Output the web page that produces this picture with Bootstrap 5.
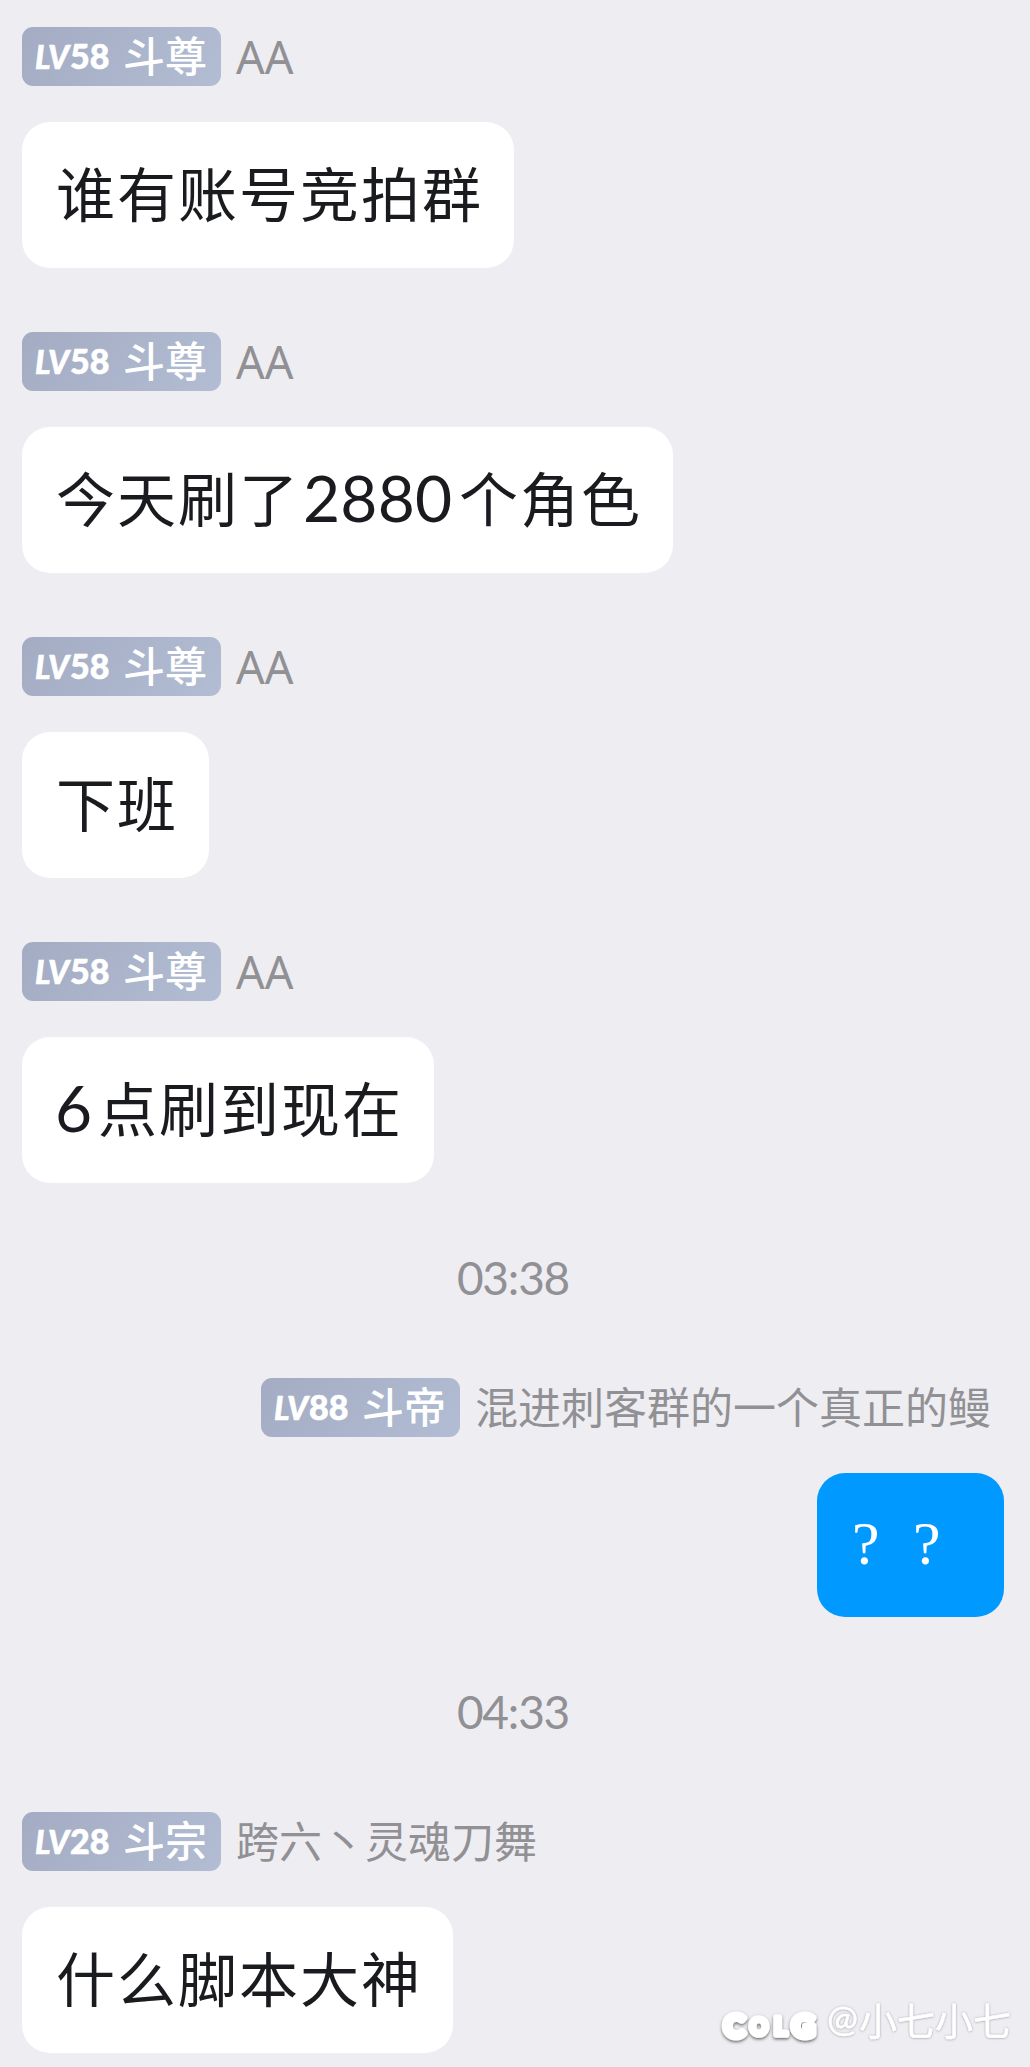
<!DOCTYPE html>
<html lang="zh-CN">
<head>
<meta charset="utf-8">
<meta name="viewport" content="width=device-width, initial-scale=1">
<title>群聊</title>
<link href="https://cdn.jsdelivr.net/npm/bootstrap@5.3.0/dist/css/bootstrap.min.css" rel="stylesheet">
<style>
  body { background: #eeedf2; font-family: Lato, "Noto Sans CJK SC", sans-serif; overflow-x: hidden; }
  .chat { padding: 27px 26px 14px 22px; height: 2067px; }
  .entry { margin-bottom: 64px; }
  .who { height: 59px; margin-bottom: 36px; white-space: nowrap; }
  .own .who { padding-right: 14px; }
  .rank { width: 199px; height: 59px; border-radius: 11px; padding-left: 13px; color: #fff;
    background: linear-gradient(125deg, #a3acc3, #b2bcd3); }
  .lv { width: 88px; font: italic 900 32px/58px Lato, sans-serif; letter-spacing: 0; -webkit-text-stroke: .6px #fff; }
  .lv b { font-style: normal; font-weight: 900; font-size: 34px; margin-left: 1px; }
  .grade { font: 500 42px/54px "Noto Sans CJK SC", sans-serif; }
  .nick { margin-left: 15px; margin-right: -1px; font-size: 43px; line-height: 55px; height: 59px; color: #919094; font-family: "Noto Sans CJK SC", sans-serif; }
  .nick.latin { font: 400 45px/59px "Noto Sans", sans-serif; }
  .bubble { height: 146px; padding: 0 31px 0 34px; border-radius: 28px; background: #fff; color: #1a1b1e;
    font-size: 59px; line-height: 140px; letter-spacing: 2px; white-space: nowrap; font-family: "Noto Sans CJK SC", sans-serif; }
  .own .bubble { background: #0099ff; color: #fff; height: 144px; line-height: 132px; }
  .num { display: inline-block; font: 400 64px/1 Lato, sans-serif; letter-spacing: .2px; padding-left: 3px; }
  .num.four { width: 159px; }
  .num.one { width: 42px; padding-left: 0; margin-left: -1px; margin-right: 1px; }
  .ask { display: inline-block; width: 61px; padding-left: 1px; letter-spacing: 0; font: 400 62px/1 "Liberation Serif", serif; }
  .clock { height: 60px; margin-bottom: 71px; font-size: 46px; line-height: 62px; color: #919094; letter-spacing: -1.2px; text-align: center; }
  .sign { position: absolute; left: 716px; top: 1974px; }
</style>
</head>
<body>
<main class="chat position-relative d-flex flex-column">
  <section class="entry d-flex flex-column align-items-start">
    <div class="who d-flex align-items-center"><div class="rank d-flex"><span class="lv">LV<b>58</b></span><span class="grade">斗尊</span></div><span class="nick latin">AA</span></div>
    <div class="bubble">谁有账号竞拍群</div>
  </section>
  <section class="entry d-flex flex-column align-items-start">
    <div class="who d-flex align-items-center"><div class="rank d-flex"><span class="lv">LV<b>58</b></span><span class="grade">斗尊</span></div><span class="nick latin">AA</span></div>
    <div class="bubble">今天刷了<span class="num four">2880</span>个角色</div>
  </section>
  <section class="entry d-flex flex-column align-items-start">
    <div class="who d-flex align-items-center"><div class="rank d-flex"><span class="lv">LV<b>58</b></span><span class="grade">斗尊</span></div><span class="nick latin">AA</span></div>
    <div class="bubble">下班</div>
  </section>
  <section class="entry d-flex flex-column align-items-start">
    <div class="who d-flex align-items-center"><div class="rank d-flex"><span class="lv">LV<b>58</b></span><span class="grade">斗尊</span></div><span class="nick latin">AA</span></div>
    <div class="bubble"><span class="num one">6</span>点刷到现在</div>
  </section>
  <div class="clock">03:38</div>
  <section class="entry own d-flex flex-column align-items-end">
    <div class="who d-flex align-items-center"><div class="rank d-flex"><span class="lv">LV<b>88</b></span><span class="grade">斗帝</span></div><span class="nick">混进刺客群的一个真正的鳗</span></div>
    <div class="bubble"><span class="ask">?</span><span class="ask">?</span></div>
  </section>
  <div class="clock">04:33</div>
  <section class="d-flex flex-column align-items-start">
    <div class="who d-flex align-items-center"><div class="rank d-flex"><span class="lv">LV<b>28</b></span><span class="grade">斗宗</span></div><span class="nick">跨六丶灵魂刀舞</span></div>
    <div class="bubble">什么脚本大神</div>
  </section>
  <svg class="sign" width="304" height="90" viewBox="716 1974 304 90" role="img" aria-label="COLG @小七小七">
    <defs>
      <filter id="soft" x="-10%" y="-30%" width="120%" height="170%"><feDropShadow dx="0" dy="1.5" stdDeviation="1.4" flood-color="#444" flood-opacity=".8"/></filter>
      <filter id="thin" x="-10%" y="-30%" width="120%" height="170%"><feDropShadow dx="0" dy="0.3" stdDeviation="1" flood-color="#777" flood-opacity=".7"/></filter>
    </defs>
    <g fill="#fff" stroke="#fff" stroke-linejoin="round" stroke-linecap="round" font-family="Lato, sans-serif" font-weight="700" filter="url(#soft)">
      <text x="724" y="2037" font-size="31" stroke-width="7">C</text>
      <text x="750" y="2035" font-size="22" stroke-width="5.5">O</text>
      <text x="774" y="2035" font-size="25" stroke-width="5.5">L</text>
      <text x="792" y="2037" font-size="31" stroke-width="7">G</text>
    </g>
    <g fill="#fff" stroke="#fff" stroke-width=".5" filter="url(#thin)">
      <text x="827" y="2032" font-size="37" font-family="Lato, sans-serif">@</text>
      <text x="859" y="2035" font-size="38" font-family="Noto Sans CJK SC, sans-serif">小七小七</text>
    </g>
  </svg>
</main>
<script src="https://cdn.jsdelivr.net/npm/bootstrap@5.3.0/dist/js/bootstrap.bundle.min.js"></script>
</body>
</html>
